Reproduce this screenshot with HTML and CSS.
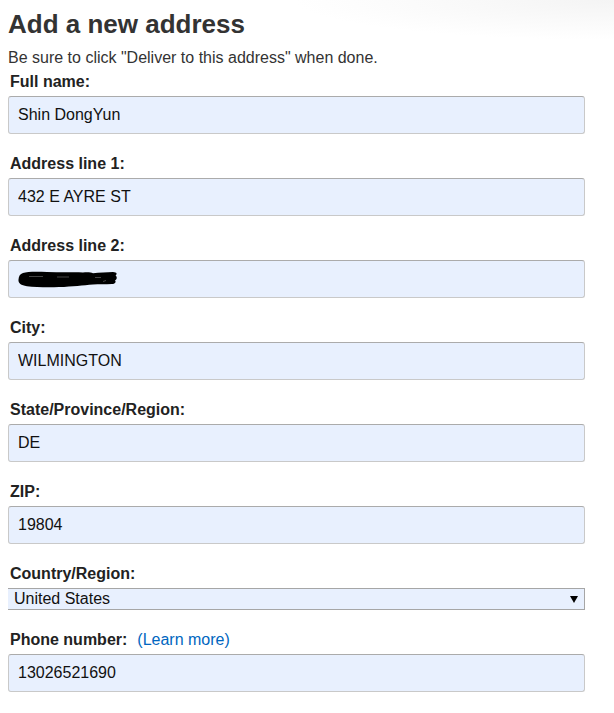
FILE: index.html
```html
<!DOCTYPE html>
<html lang="en">
<head>
<meta charset="utf-8">
<title>Add a new address</title>
<link rel="stylesheet" href="styles.css">
</head>
<body>
<div class="page">
  <h1 class="title">Add a new address</h1>
  <p class="hint">Be sure to click "Deliver to this address" when done.</p>
  <form class="form">
    <div class="group">
      <label class="label">Full name:</label>
      <input class="field" type="text" value="Shin DongYun">
    </div>
    <div class="group">
      <label class="label">Address line 1:</label>
      <input class="field" type="text" value="432 E AYRE ST">
    </div>
    <div class="group">
      <label class="label">Address line 2:</label>
      <div class="field">
        <svg class="redact" width="102" height="20" viewBox="0 0 102 20" aria-hidden="true">
          <path d="M6 4 C10 2.5 20 2.5 30 3 C42 3.5 55 3 66 3.5 C70 2.8 74 3.2 76 4.2 C82 3.6 90 3.2 96 3 C100 3.2 100.5 5 98.5 6.5 C100.5 8 100 10.5 98 11.5 C99.5 13 98 15 95 15 C88 15.5 82 15.2 76 15.4 C66 16.3 56 17.5 42 18 C30 18.5 18 18 10 17.2 C4 16.5 1 14 1.5 10.5 C1.8 7 3 5 6 4 Z" fill="#000"/>
          <path d="M12 7.5 H26 M40 8 H52 M78 8.5 H84 M86 12.5 L89 11.5" stroke="#555" stroke-width="0.8" fill="none"/>
        </svg>
      </div>
    </div>
    <div class="group">
      <label class="label">City:</label>
      <input class="field" type="text" value="WILMINGTON">
    </div>
    <div class="group">
      <label class="label">State/Province/Region:</label>
      <input class="field" type="text" value="DE">
    </div>
    <div class="group">
      <label class="label">ZIP:</label>
      <input class="field" type="text" value="19804">
    </div>
    <div class="group">
      <label class="label">Country/Region:</label>
      <div class="select">
        <span class="select-text">United States</span>
        <svg class="select-arrow" width="8" height="7" viewBox="0 0 8 7" aria-hidden="true"><path d="M0 0 H8 L4 7 Z" fill="#000"/></svg>
      </div>
    </div>
    <div class="group">
      <label class="label">Phone number:<span class="learn">(Learn more)</span></label>
      <input class="field" type="text" value="13026521690">
    </div>
  </form>
</div>
</body>
</html>
```

FILE: styles.css
```css
html {
  background: #fff radial-gradient(ellipse 320px 40px at 100% 0, #f4f4f4, rgba(255,255,255,0)) no-repeat;
}
body {
  margin: 8px;
  font-family: "Liberation Sans", Arial, sans-serif;
  color: #111;
}
.page {
  width: 577px;
}
.title {
  margin: 0 0 8px;
  font-size: 26px;
  line-height: 32px;
  font-weight: 700;
  color: #333;
}
.hint {
  margin: 0 0 5px;
  font-size: 16px;
  line-height: 19px;
  color: #333;
}
.form {
  display: flex;
  flex-direction: column;
  gap: 20px;
}
.group {
  display: flex;
  flex-direction: column;
  gap: 5px;
}
.label {
  padding-left: 2px;
  font-size: 16px;
  line-height: 19px;
  font-weight: 700;
  color: #222;
}
.learn {
  margin-left: 10px;
  font-weight: 400;
  color: #0066c0;
}
.field {
  box-sizing: border-box;
  width: 577px;
  height: 38px;
  margin: 0;
  padding: 0 9px;
  border: 1px solid #c9c9c9;
  border-top-color: #ababab;
  border-radius: 3px;
  background: #e8f0fe;
  font-family: "Liberation Sans", Arial, sans-serif;
  font-size: 16px;
  color: #111;
  display: flex;
  align-items: center;
  outline: none;
}
.redact {
  display: block;
  margin-left: -1px;
}
.select {
  box-sizing: border-box;
  width: 578px;
  height: 22px;
  margin-left: -1px;
  padding: 0 6px 0 6px;
  border: 1px solid #a6a6a6;
  background: #e8f0fe;
  display: flex;
  align-items: center;
  justify-content: space-between;
  font-size: 16px;
  color: #111;
}
.select-arrow {
  display: block;
  margin-top: 1px;
}
```
